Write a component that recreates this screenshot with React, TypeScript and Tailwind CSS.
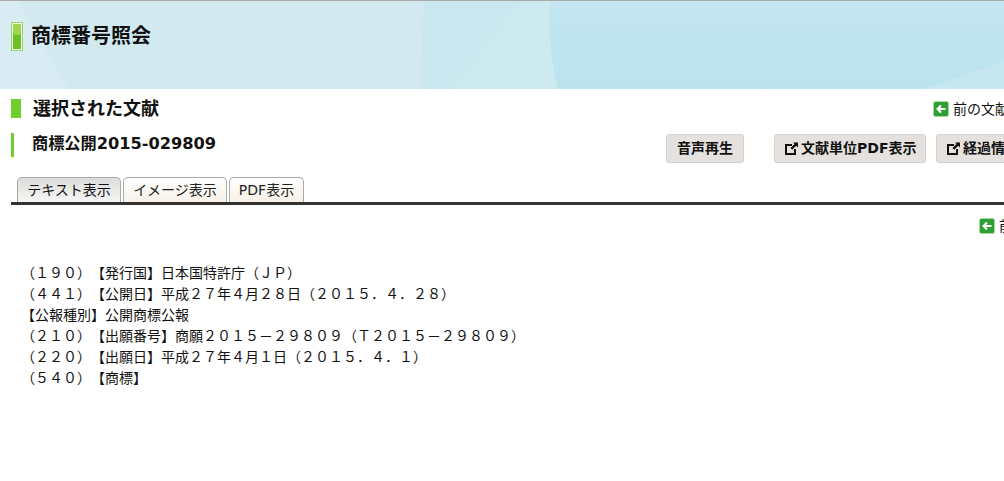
import React from "react";

const FONT = "font-['DejaVu_Sans','Noto_Sans_CJK_JP',sans-serif]";

function BackIcon() {
  return (
    <svg width="16" height="16" viewBox="0 0 16 16" className="shrink-0">
      <rect x="0.5" y="0.5" width="15" height="15" rx="2" fill="#2f9e35" stroke="#a5dc9a" />
      <path d="M12.500 8H5M8 4.500 4.500 8 8 11.500" fill="none" stroke="#ffffff" strokeWidth="2" />
    </svg>
  );
}

function ExtIcon() {
  return (
    <svg width="13" height="13" viewBox="0 0 13 13" className="shrink-0">
      <path d="M7 3H1V12H10V7" fill="none" stroke="#111" strokeWidth="2" />
      <path d="M8 0.500H13V5.500L11.200 3.800 7.200 7.800 5.500 6.100 9.500 2.100Z" fill="#111" />
    </svg>
  );
}

function Btn({ children, w }: { children: React.ReactNode; w: string }) {
  return (
    <div className={`${w} h-[29px] shrink-0 flex items-center pl-[10px] gap-[3px] rounded-[3px] border border-[#d6d2cd] bg-[#e5e1de] text-[14px] font-bold text-[#111] whitespace-nowrap`}>
      {children}
    </div>
  );
}

function Tab({ label, active, w }: { label: string; active?: boolean; w: string }) {
  return (
    <div
      className={`${w} h-[25px] flex items-center justify-center rounded-t-[5px] border border-b-0 border-[#a9a9a9] text-[14px] whitespace-nowrap ${
        active ? "bg-gradient-to-b from-[#dcdcda] to-[#f6f6f4] text-[#111]" : "bg-gradient-to-b from-[#ffffff] to-[#f7f1e8] text-[#222]"
      }`}
    >
      {label}
    </div>
  );
}

const LINES = [
  "（１９０）【発行国】日本国特許庁（ＪＰ）",
  "（４４１）【公開日】平成２７年４月２８日（２０１５．４．２８）",
  "【公報種別】公開商標公報",
  "（２１０）【出願番号】商願２０１５－２９８０９（Ｔ２０１５－２９８０９）",
  "（２２０）【出願日】平成２７年４月１日（２０１５．４．１）",
  "（５４０）【商標】",
];

export default function App() {
  return (
    <div className={`w-[1004px] h-[481px] overflow-hidden bg-white text-[#111] ${FONT}`}>
      <header className="relative h-[89px] border-t border-[#a8a8a8] bg-[#d2e9f0] overflow-hidden">
        <svg className="absolute inset-0" width="1004" height="88" viewBox="0 0 1004 88">
          <defs>
            <linearGradient id="fade" x1="0" y1="0" x2="0" y2="1">
              <stop offset="0" stopColor="#c3e5ef" />
              <stop offset="1" stopColor="#bbe3ee" />
            </linearGradient>
          </defs>
          <path d="M0 0H18L68 88H0Z" fill="#d9ecf3" />
          <path d="M423 0H550V88H421Z" fill="#cae8f0" />
          <path d="M524 0H550C548 30 551 60 558 88H455Z" fill="#cdeaf1" />
          <path d="M550 0H1004V88H558C551 60 548 30 550 0Z" fill="url(#fade)" />
          <path d="M925 88 1004 60V88Z" fill="#c6e7ef" />
        </svg>
        <div className="relative flex items-center gap-[8px] pl-[11px] pt-[21px]">
          <div className="w-[12px] h-[29px] border border-[#8fdc55] p-px bg-white">
            <div className="h-full bg-[#6cc024]">
              <div className="h-[11px] bg-[#9ed64e] rounded-b-[3px]" />
            </div>
          </div>
          <h1 className="text-[20px] leading-[28px] -mt-[2px] font-bold text-[#111]">商標番号照会</h1>
        </div>
      </header>

      <main className="w-[1160px] pl-[11px]">
        <div className="flex items-center h-[19px] mt-[10px] relative">
          <div className="w-[10px] h-[19px] bg-[#6fcf2b] shrink-0" />
          <h2 className="ml-[12px] text-[18px] leading-[19px] font-bold">選択された文献</h2>
          <div className="absolute left-[922px] top-[2px] flex items-center gap-[4px] text-[14px] leading-[16px] whitespace-nowrap">
            <BackIcon />
            <span>前の文献</span>
          </div>
        </div>

        <div className="flex items-start mt-[15px] h-[44px]">
          <div className="flex items-center h-[24px] border-l-[3px] border-[#6fcf2b] pl-[18px] w-[655px] shrink-0">
            <span className="text-[16.200px] -mt-[1px] font-bold whitespace-nowrap">商標公開2015-029809</span>
          </div>
          <div className="flex gap-[30px] mt-[1px]">
            <Btn w="w-[78px]">音声再生</Btn>
            <div className="flex gap-[10px]">
              <Btn w="w-[152px]"><ExtIcon />文献単位PDF表示</Btn>
              <Btn w="w-[152px]"><ExtIcon />経過情報</Btn>
            </div>
          </div>
        </div>

        <div className="flex gap-[2px] pl-[6px]">
          <Tab label="テキスト表示" active w="w-[104px]" />
          <Tab label="イメージ表示" w="w-[104px]" />
          <Tab label="PDF表示" w="w-[75px]" />
        </div>
        <div className="h-[3px] bg-[#333333]" />

        <div className="relative h-[13px]">
          <div className="absolute left-[968px] top-[13px] flex items-center gap-[4px] text-[14px] leading-[16px] whitespace-nowrap">
            <BackIcon />
            <span>前の文献</span>
          </div>
        </div>

        <div className="mt-[45px] pl-[10px] text-[14px] leading-[21px] text-[#111] [text-spacing-trim:space-all]">
          {LINES.map((l) => (
            <div key={l} className="whitespace-nowrap">{l}</div>
          ))}
        </div>
      </main>
    </div>
  );
}
